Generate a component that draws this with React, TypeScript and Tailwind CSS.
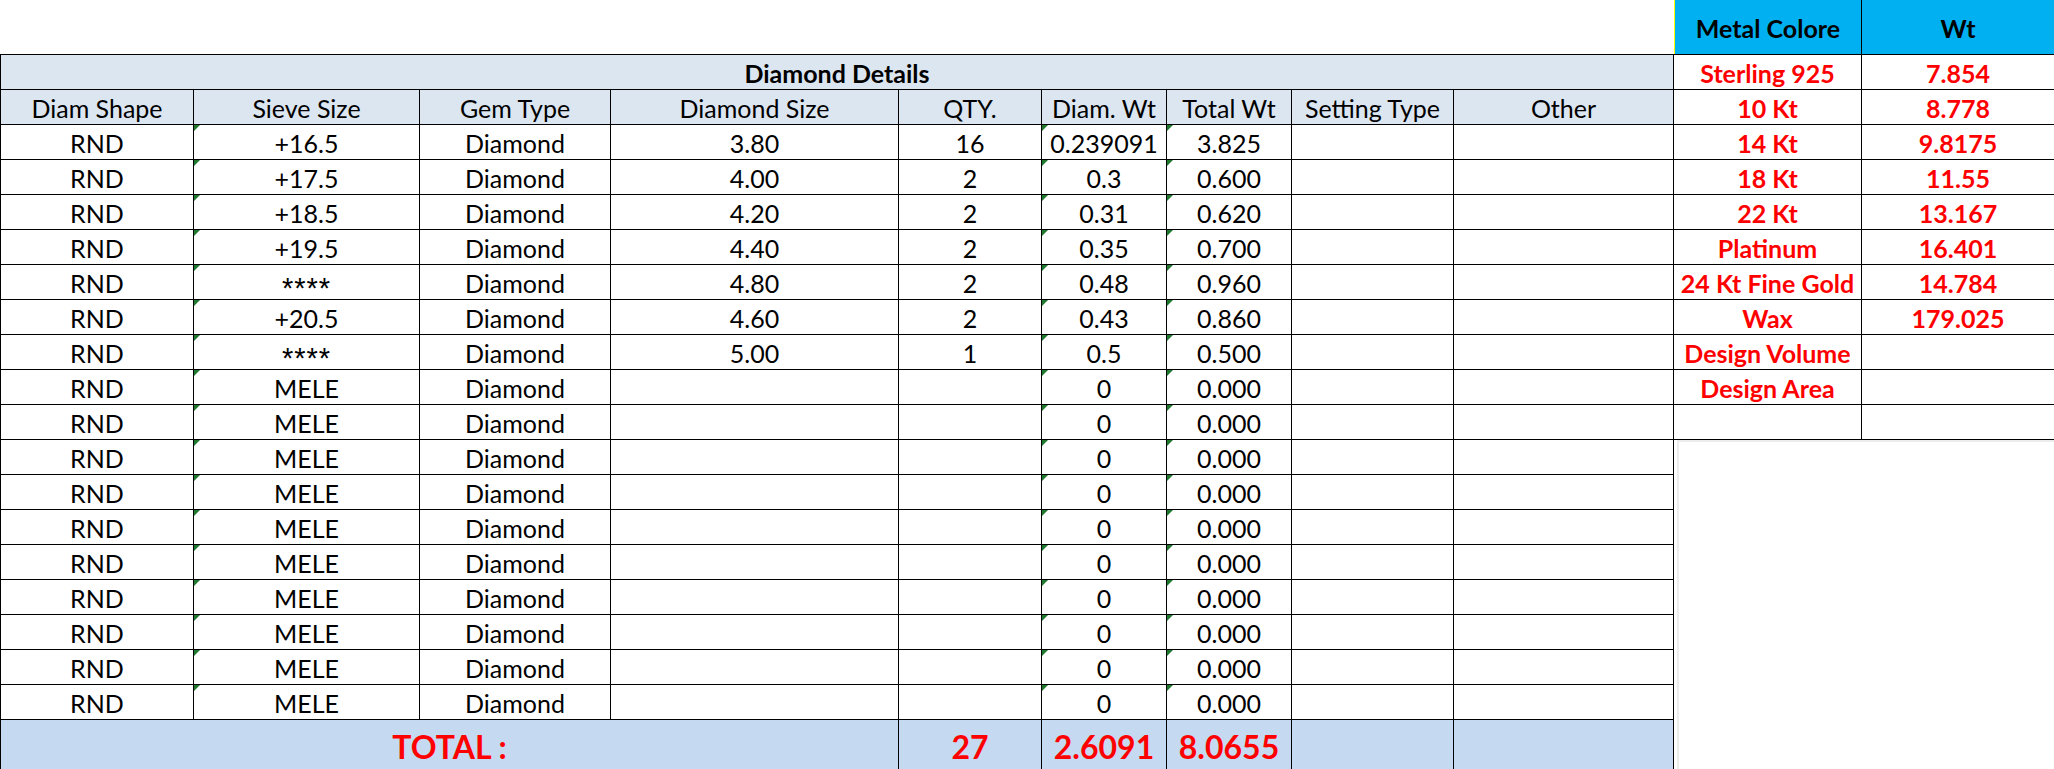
const cols =
  "grid grid-cols-[193px_226px_191px_288px_143px_125px_125px_162px_220px]";

const headers = [
  "Diam Shape",
  "Sieve Size",
  "Gem Type",
  "Diamond Size",
  "QTY.",
  "Diam. Wt",
  "Total Wt",
  "Setting Type",
  "Other",
];

const filled: string[][] = [
  ["RND", "+16.5", "Diamond", "3.80", "16", "0.239091", "3.825"],
  ["RND", "+17.5", "Diamond", "4.00", "2", "0.3", "0.600"],
  ["RND", "+18.5", "Diamond", "4.20", "2", "0.31", "0.620"],
  ["RND", "+19.5", "Diamond", "4.40", "2", "0.35", "0.700"],
  ["RND", "****", "Diamond", "4.80", "2", "0.48", "0.960"],
  ["RND", "+20.5", "Diamond", "4.60", "2", "0.43", "0.860"],
  ["RND", "****", "Diamond", "5.00", "1", "0.5", "0.500"],
];

const rows: string[][] = [
  ...filled.map((r) => [...r, "", ""]),
  ...Array.from({ length: 10 }, () => [
    "RND",
    "MELE",
    "Diamond",
    "",
    "",
    "0",
    "0.000",
    "",
    "",
  ]),
];

// columns that carry Excel's little green "number as text" flag
const flagged = [1, 5, 6];

const metals: [string, string][] = [
  ["Sterling 925", "7.854"],
  ["10 Kt", "8.778"],
  ["14 Kt", "9.8175"],
  ["18 Kt", "11.55"],
  ["22 Kt", "13.167"],
  ["Platinum", "16.401"],
  ["24 Kt Fine Gold", "14.784"],
  ["Wax", "179.025"],
  ["Design Volume", ""],
  ["Design Area", ""],
  ["", ""],
];

function Flag() {
  return (
    <span className="absolute left-0 top-0 h-0 w-0 border-r-[6px] border-t-[6px] border-r-transparent border-t-[#1f7a2e]" />
  );
}

export default function App() {
  return (
    <div className="flex h-[769px] w-[2054px] overflow-hidden bg-white font-['Lato',sans-serif] text-[25px] leading-none text-black">
      {/* diamond details sheet */}
      <div className="w-[1674px] shrink-0">
        <div className="h-[54px]" />
        <div className="border-l border-t border-black">
          <div className="flex h-[35px] items-center justify-center border-b border-r border-black bg-[#dce6f1] pt-[2px] font-bold">
            Diamond Details
          </div>
          <div className={`${cols} bg-[#dce6f1]`}>
            {headers.map((h) => (
              <div
                key={h}
                className="flex h-[35px] items-center justify-center border-b border-r border-black pt-[2px]"
              >
                {h}
              </div>
            ))}
          </div>
          {rows.map((r, i) => (
            <div key={i} className={cols}>
              {r.map((c, j) => (
                <div
                  key={j}
                  className="relative flex h-[35px] items-center justify-center border-b border-r border-black pt-[2px]"
                >
                  {flagged.includes(j) && <Flag />}
                  {c === "****" ? (
                    <span className="pt-[10px] font-['Liberation_Sans',sans-serif] text-[29px] tracking-[1px]">
                      {c}
                    </span>
                  ) : (
                    c
                  )}
                </div>
              ))}
            </div>
          ))}
          <div
            className={`${cols} bg-[#c5d9f1] text-[32px] font-bold text-[#ff0000]`}
          >
            <div className="col-span-4 flex h-[54px] items-center justify-center border-r border-black">
              TOTAL :
            </div>
            <div className="flex h-[54px] items-center justify-center border-r border-black">
              27
            </div>
            <div className="flex h-[54px] items-center justify-center border-r border-black">
              2.6091
            </div>
            <div className="flex h-[54px] items-center justify-center border-r border-black">
              8.0655
            </div>
            <div className="h-[54px] border-r border-black" />
            <div className="h-[54px] border-r border-black" />
          </div>
        </div>
      </div>

      {/* metal weights */}
      <div className="w-[380px] shrink-0">
        <div className="grid h-[55px] grid-cols-[188px_1fr] border-b border-black bg-[#00b0f0] font-bold">
          <div className="flex items-center justify-center border-l border-r border-l-[#ffff00] border-r-black pt-[2px]">
            Metal Colore
          </div>
          <div className="flex items-center justify-center pt-[2px]">Wt</div>
        </div>
        {metals.map(([name, wt], i) => (
          <div
            key={i}
            className="grid h-[35px] grid-cols-[188px_1fr] border-b border-black font-bold text-[#ff0000]"
          >
            <div className="flex items-center justify-center border-r border-black pt-[2px]">
              {name}
            </div>
            <div className="flex items-center justify-center pt-[2px]">
              {wt}
            </div>
          </div>
        ))}
        <div className="ml-[3px] h-full border-l-2 border-t-2 border-[#ececec]" />
      </div>
    </div>
  );
}
